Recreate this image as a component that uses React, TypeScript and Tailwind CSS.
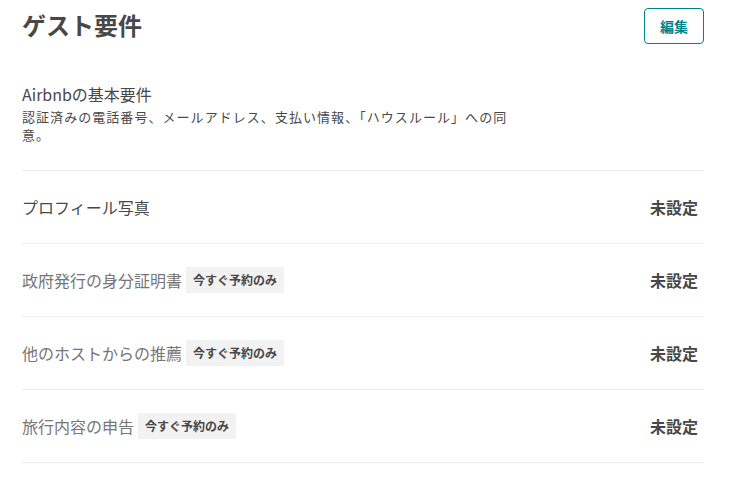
import React from 'react';

const rows = [
  { label: 'プロフィール写真', badge: false, dark: true },
  { label: '政府発行の身分証明書', badge: true, dark: false },
  { label: '他のホストからの推薦', badge: true, dark: false },
  { label: '旅行内容の申告', badge: true, dark: false },
];

export default function App() {
  return (
    <div
      className="w-[730px] h-[478px] bg-white pl-[22px] pr-[26px] text-[#484848] overflow-hidden"
      style={{ fontFamily: '"Noto Sans CJK JP", "Noto Sans", sans-serif' }}
    >
      {/* Header */}
      <div className="flex items-start justify-between pt-[8px]">
        <h1 className="text-[24px] font-bold leading-[34px] text-[#484848]">ゲスト要件</h1>
        <button className="w-[60px] h-[36px] rounded-[4px] border border-[#008489] text-[#008489] text-[14px] font-bold leading-none">
          編集
        </button>
      </div>

      {/* Basic requirements */}
      <div className="mt-[38px] pb-[26px] border-b border-[#ebebeb]">
        <div className="text-[16px] leading-[24px]">Airbnbの基本要件</div>
        <p className="mt-[2px] text-[13px] leading-[18px] tracking-[1.05px]">
          認証済みの電話番号、メールアドレス、支払い情報、「ハウスルール」への同
          <br />
          意。
        </p>
      </div>

      {/* Rows */}
      {rows.map((r) => (
        <div key={r.label} className="h-[73px] flex items-center justify-between border-b border-[#ebebeb]">
          <div className="flex items-center gap-[4px]">
            <span className={`text-[16px] ${r.dark ? 'text-[#484848]' : 'text-[#767676]'}`}>{r.label}</span>
            {r.badge && (
              <span className="bg-[#f2f2f2] px-[7px] h-[26px] flex items-center text-[12px] font-bold text-[#484848]">
                今すぐ予約のみ
              </span>
            )}
          </div>
          <span className="mr-[6px] text-[16px] font-bold text-[#484848]">未設定</span>
        </div>
      ))}
    </div>
  );
}
